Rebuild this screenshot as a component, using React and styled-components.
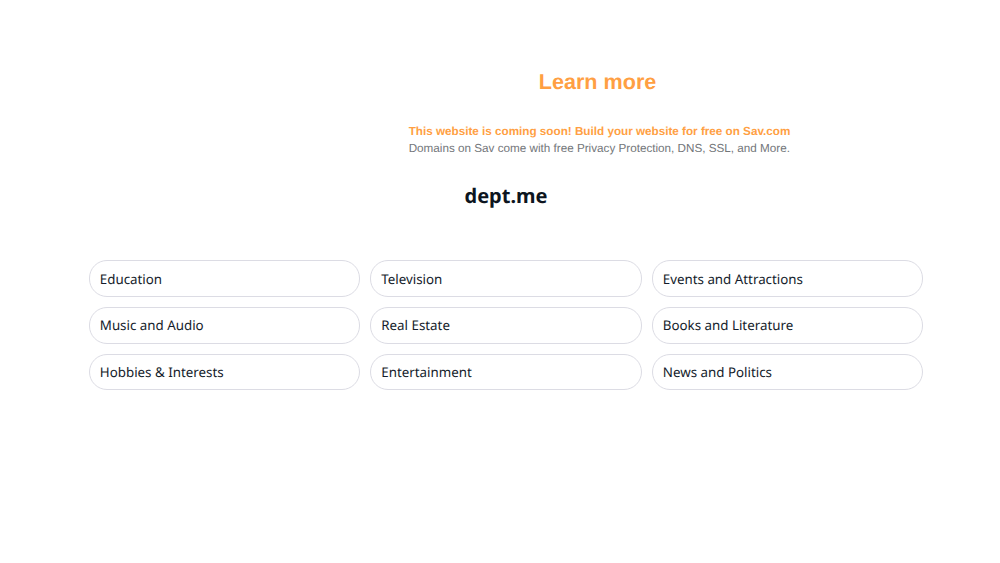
import React from 'react'
import styled, { createGlobalStyle } from 'styled-components'

const GlobalStyle = createGlobalStyle`
  html, body {
    margin: 0;
    height: 100%;
    background: #fff;
    text-rendering: geometricPrecision;
  }
`

const Page = styled.div`
  width: 1000px;
  height: 563px;
  overflow: hidden;
  display: flex;
  flex-direction: column;
`

const Promo = styled.div`
  display: flex;
  flex-direction: column;
  align-items: center;
  padding-top: 68px;
  padding-left: 195px;
  font-family: "Liberation Sans", Arial, sans-serif;
`

const LearnMore = styled.a`
  font-size: 21.6px;
  line-height: 28px;
  font-weight: 700;
  color: #ff9f43;
`

const Notice = styled.div`
  margin-top: 28px;
  margin-left: 4px;
  font-size: 11.7px;
  line-height: 16.5px;
`

const NoticeTitle = styled.div`
  font-weight: 700;
  color: #ff9f43;
`

const NoticeText = styled.div`
  color: #73767a;
`

const Domain = styled.h1`
  margin: 24px 0 0;
  padding-left: 12px;
  text-align: center;
  font-family: "Noto Sans", sans-serif;
  font-size: 20px;
  line-height: 30px;
  font-weight: 700;
  color: #0d1520;
`

const Grid = styled.div`
  display: grid;
  grid-template-columns: repeat(3, 271.5px);
  column-gap: 10px;
  row-gap: 10px;
  margin: 49.4px 0 0 88.8px;
`

const Topic = styled.a`
  box-sizing: border-box;
  height: 36.6px;
  display: flex;
  align-items: center;
  padding: 0 10px;
  border: 1px solid #dcdce4;
  border-radius: 18px;
  font-family: "Noto Sans", sans-serif;
  font-size: 13.33px;
  color: #141c2b;
`

const topics = [
  'Education',
  'Television',
  'Events and Attractions',
  'Music and Audio',
  'Real Estate',
  'Books and Literature',
  'Hobbies & Interests',
  'Entertainment',
  'News and Politics',
]

export default function App() {
  return (
    <Page>
      <GlobalStyle />
      <Promo>
        <LearnMore>Learn more</LearnMore>
        <Notice>
          <NoticeTitle>This website is coming soon! Build your website for free on Sav.com</NoticeTitle>
          <NoticeText>Domains on Sav come with free Privacy Protection, DNS, SSL, and More.</NoticeText>
        </Notice>
      </Promo>
      <Domain>dept.me</Domain>
      <Grid>
        {topics.map((topic) => (
          <Topic key={topic}>{topic}</Topic>
        ))}
      </Grid>
    </Page>
  )
}
